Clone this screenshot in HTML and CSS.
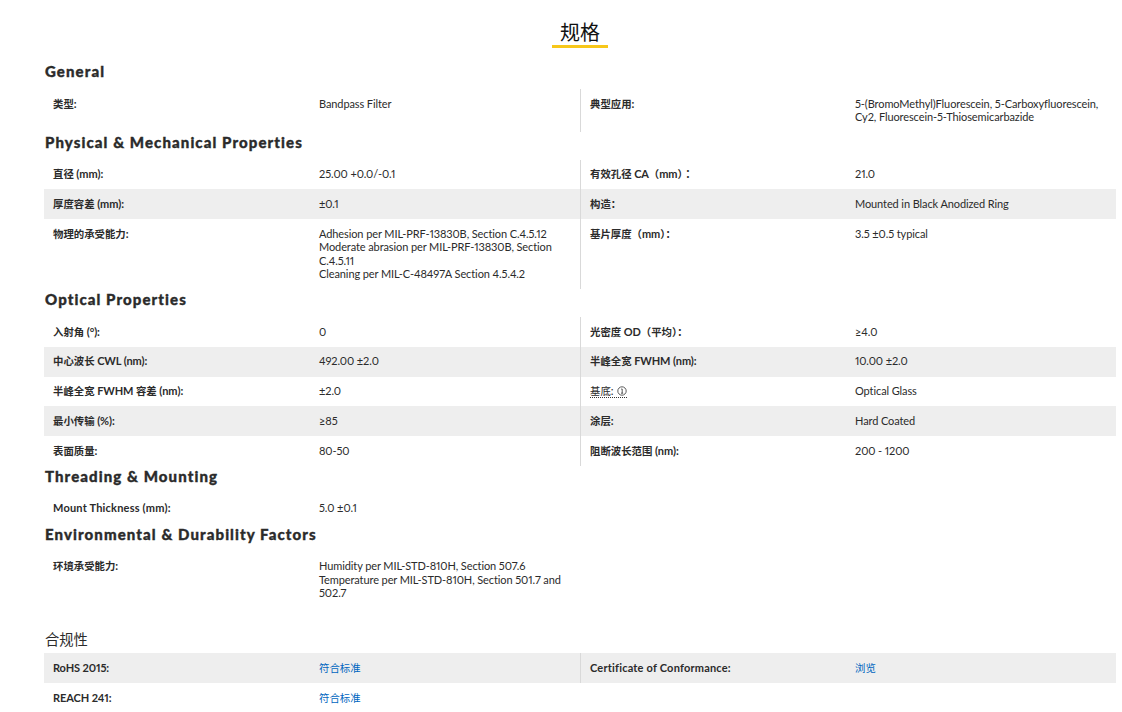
FILE: index.html
```html
<!DOCTYPE html>
<html lang="zh-CN">
<head>
<meta charset="utf-8">
<title>规格</title>
<link rel="stylesheet" href="styles.css">
</head>
<body>
<main class="page">
  <h2 class="title"><span class="title-text">规格</span></h2>

  <h3 class="group first">General</h3>
  <div class="spec">
    <div class="row">
      <div class="cell"><div class="k"><span class="zh">类型</span>:</div><div class="v">Bandpass Filter</div></div>
      <div class="cell right"><div class="k"><span class="zh">典型应用</span>:</div><div class="v">5-(BromoMethyl)Fluorescein, 5-Carboxyfluorescein, Cy2, Fluorescein-5-Thiosemicarbazide</div></div>
    </div>
  </div>

  <h3 class="group">Physical &amp; Mechanical Properties</h3>
  <div class="spec">
    <div class="row">
      <div class="cell"><div class="k"><span class="zh">直径</span> (mm):</div><div class="v">25.00 +0.0/-0.1</div></div>
      <div class="cell right"><div class="k"><span class="zh">有效孔径</span> CA<span class="fw">（</span>mm<span class="fw">）：</span></div><div class="v">21.0</div></div>
    </div>
    <div class="row alt">
      <div class="cell"><div class="k"><span class="zh">厚度容差</span> (mm):</div><div class="v">±0.1</div></div>
      <div class="cell right"><div class="k"><span class="zh">构造</span><span class="fw">：</span></div><div class="v">Mounted in Black Anodized Ring</div></div>
    </div>
    <div class="row">
      <div class="cell"><div class="k"><span class="zh">物理的承受能力</span>:</div><div class="v">Adhesion per MIL-PRF-13830B, Section C.4.5.12<br>Moderate abrasion per MIL-PRF-13830B, Section C.4.5.11<br>Cleaning per MIL-C-48497A Section 4.5.4.2</div></div>
      <div class="cell right"><div class="k"><span class="zh">基片厚度</span><span class="fw">（</span>mm<span class="fw">）：</span></div><div class="v">3.5 ±0.5 typical</div></div>
    </div>
  </div>

  <h3 class="group">Optical Properties</h3>
  <div class="spec">
    <div class="row">
      <div class="cell"><div class="k"><span class="zh">入射角</span> (°):</div><div class="v">0</div></div>
      <div class="cell right"><div class="k"><span class="zh">光密度</span> OD<span class="fw">（</span><span class="zh">平均</span><span class="fw">）：</span></div><div class="v">≥4.0</div></div>
    </div>
    <div class="row alt">
      <div class="cell"><div class="k"><span class="zh">中心波长</span> CWL (nm):</div><div class="v">492.00 ±2.0</div></div>
      <div class="cell right"><div class="k"><span class="zh">半峰全宽</span> FWHM (nm):</div><div class="v">10.00 ±2.0</div></div>
    </div>
    <div class="row">
      <div class="cell"><div class="k"><span class="zh">半峰全宽</span> FWHM <span class="zh">容差</span> (nm):</div><div class="v">±2.0</div></div>
      <div class="cell right"><div class="k"><span class="tip"><span class="zh">基底</span>: <svg class="info" viewBox="0 0 10 10" width="10" height="10"><circle cx="5" cy="5" r="4.2" fill="none" stroke="#333" stroke-width=".8"/><path d="M4.2 3h1v4.2M4 7.2h2.2" fill="none" stroke="#333" stroke-width=".8"/></svg></span></div><div class="v">Optical Glass</div></div>
    </div>
    <div class="row alt">
      <div class="cell"><div class="k"><span class="zh">最小传输</span> (%):</div><div class="v">≥85</div></div>
      <div class="cell right"><div class="k"><span class="zh">涂层</span>:</div><div class="v">Hard Coated</div></div>
    </div>
    <div class="row">
      <div class="cell"><div class="k"><span class="zh">表面质量</span>:</div><div class="v">80-50</div></div>
      <div class="cell right"><div class="k"><span class="zh">阻断波长范围</span> (nm):</div><div class="v">200 - 1200</div></div>
    </div>
  </div>

  <h3 class="group">Threading &amp; Mounting</h3>
  <div class="spec">
    <div class="row">
      <div class="cell"><div class="k latin">Mount Thickness (mm):</div><div class="v">5.0 ±0.1</div></div>
    </div>
  </div>

  <h3 class="group">Environmental &amp; Durability Factors</h3>
  <div class="spec">
    <div class="row">
      <div class="cell"><div class="k"><span class="zh">环境承受能力</span>:</div><div class="v">Humidity per MIL-STD-810H, Section 507.6<br>Temperature per MIL-STD-810H, Section 501.7 and 502.7</div></div>
    </div>
  </div>

  <h3 class="compliance">合规性</h3>
  <div class="spec compliance-rows">
    <div class="row alt">
      <div class="cell"><div class="k">RoHS 2015:</div><div class="v"><a class="zh" href="#">符合标准</a></div></div>
      <div class="cell right"><div class="k latin">Certificate of Conformance:</div><div class="v"><a class="zh" href="#">浏览</a></div></div>
    </div>
    <div class="row">
      <div class="cell"><div class="k">REACH 241:</div><div class="v"><a class="zh" href="#">符合标准</a></div></div>
    </div>
  </div>
</main>
</body>
</html>
```
FILE: styles.css
```css
* { box-sizing: border-box; }
html, body { margin: 0; height: 712px; overflow: hidden; background: #fff; }
body {
  font-family: "Lato", "Noto Sans CJK SC", sans-serif;
  font-size: 11px;
  line-height: 13.6px;
  letter-spacing: -0.1px;
  font-variant-numeric: proportional-nums;
  color: #2b2b2b;
}
.page { padding: 0 6px 0 44px; }
.title { margin: 0; padding-top: 19px; text-align: center; font-weight: 400; font-size: 20px; line-height: 26px; letter-spacing: 0; color: #111; font-family: "Noto Sans CJK SC", sans-serif; }
.title-text { display: inline-block; padding: 0 8px; height: 29px; border-bottom: 3px solid #f7c71a; }
.group { margin: 0; padding: 0 1px; font-family: "Lato", "Noto Sans CJK SC", sans-serif; font-weight: 900; font-size: 15px; line-height: 20px; letter-spacing: 1.09px; height: 28px; color: #2b2b2b; -webkit-text-stroke: .35px #2b2b2b; }
.group.first { margin-top: 13px; }
.compliance { margin: 0; padding: 20px 0 0 1px; height: 45px; font-weight: 400; font-size: 14.3px; line-height: 22px; letter-spacing: 0; color: #2b2b2b; font-family: "Noto Sans CJK SC", sans-serif; }
.row { display: grid; grid-template-columns: 536px 536px; min-height: 29.75px; }
.row.alt { background: #eee; }
.cell { display: grid; grid-template-columns: 275px 1fr; padding: 7.5px 0 8px; }
.cell.right { grid-template-columns: 274px 1fr; border-left: 1px solid #d9d9d9; }
.compliance-rows .cell { padding: 8.5px 0 7px; }
.k { padding-left: 9px; font-weight: 700; }
.k.latin { letter-spacing: .2px; }
.v { padding-right: 14px; }
.cell.right .v { padding-right: 0; }
.zh { font-size: 10.4px; line-height: 1; letter-spacing: 0; }
.fw { font-family: "Noto Sans CJK TC", sans-serif; font-size: 10.4px; line-height: 1; letter-spacing: 0; }
.tip { border-bottom: 1px dotted #333; font-weight: 400; }
.info { vertical-align: -1px; margin-left: 1px; }
a { color: #0066c0; text-decoration: none; }
```
